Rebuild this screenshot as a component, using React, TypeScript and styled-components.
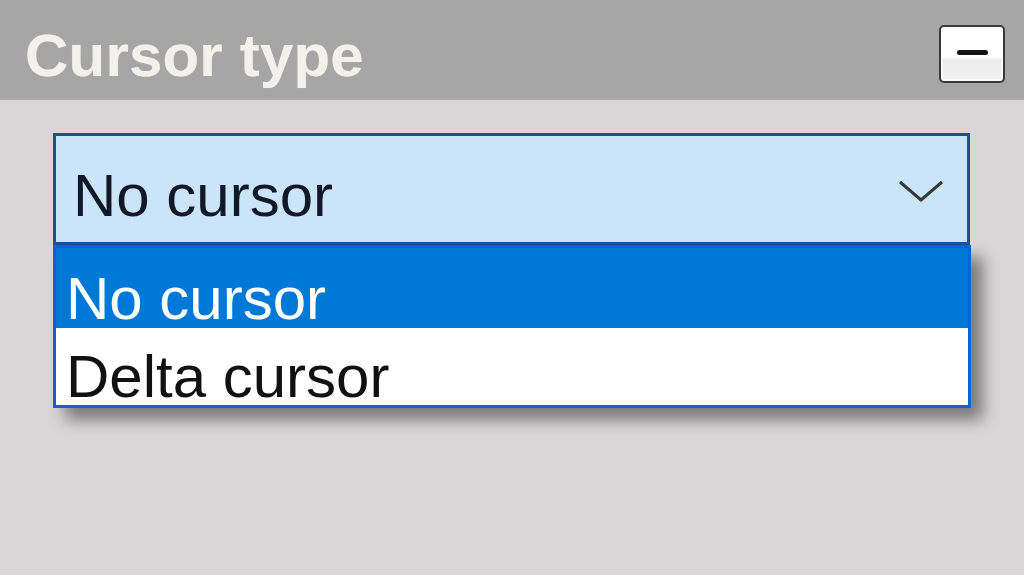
import React from "react";
import styled, { createGlobalStyle } from "styled-components";

const Global = createGlobalStyle`
  html, body { margin: 0; padding: 0; }
  body {
    width: 1024px;
    height: 575px;
    overflow: hidden;
    background: #d8d6d7;
    font-family: "Liberation Sans", Arial, sans-serif;
  }
`;

const Panel = styled.div`
  display: flex;
  flex-direction: column;
  width: 1024px;
  height: 575px;
  background: #d8d6d7;
`;

const Header = styled.div`
  display: flex;
  align-items: flex-start;
  justify-content: space-between;
  height: 100px;
  box-sizing: border-box;
  padding: 0 19px 0 25px;
  background: #a6a6a6;
  border-bottom: 2px solid #acacac;
`;

const Title = styled.div`
  font-family: "Liberation Sans", Arial, sans-serif;
  font-weight: bold;
  font-size: 60px;
  line-height: 1;
  color: #f3f1ec;
  letter-spacing: 0.2px;
  margin-top: 26px;
  text-shadow: 0 0 1px rgba(255, 255, 255, 0.4);
`;

const CollapseButton = styled.button`
  display: flex;
  align-items: flex-start;
  justify-content: center;
  width: 66px;
  height: 58px;
  margin-top: 25px;
  padding: 0;
  box-sizing: border-box;
  border: 2px solid #3a3a3a;
  border-radius: 5px;
  background: linear-gradient(to bottom, #ffffff 0%, #ffffff 55%, #ebebeb 62%, #f2f2f2 100%);
  box-shadow: inset 0 0 0 2px #fafafa;
`;

const MinusBar = styled.span`
  display: block;
  width: 31px;
  height: 5px;
  margin-top: 23px;
  border-radius: 3px;
  background: #111;
`;

const Body = styled.div`
  padding: 33px 54px 0 53px;
`;

const SelectWrap = styled.div`
  position: relative;
`;

const SelectBox = styled.div`
  display: flex;
  align-items: flex-start;
  justify-content: space-between;
  height: 112px;
  box-sizing: border-box;
  padding: 0 22px 0 17px;
  border: 3px solid #1d4f9f;
  background: #cce4f7;
`;

const SelectText = styled.span`
  font-size: 60px;
  line-height: 1;
  color: #111827;
  margin-top: 30px;
`;

const Chevron = styled.svg`
  width: 48px;
  height: 26px;
  margin-top: 42px;
`;

const List = styled.ul`
  position: absolute;
  left: 0;
  right: -1px;
  top: 100%;
  margin: 0;
  padding: 0;
  list-style: none;
  border: 3px solid #0b63d2;
  background: #ffffff;
  box-shadow: 12px 12px 14px rgba(0, 0, 0, 0.42);
`;

const Item = styled.li<{ $selected?: boolean }>`
  display: flex;
  align-items: flex-start;
  height: ${(p) => (p.$selected ? "80px" : "77px")};
  box-sizing: border-box;
  padding: ${(p) => (p.$selected ? "21px" : "19px")} 0 0 10px;
  font-size: 60px;
  line-height: 1;
  color: ${(p) => (p.$selected ? "#ffffff" : "#111111")};
  background: ${(p) => (p.$selected ? "#0078d7" : "#ffffff")};
`;

export default function App() {
  return (
    <>
      <Global />
      <Panel>
        <Header>
          <Title>Cursor type</Title>
          <CollapseButton aria-label="Collapse">
            <MinusBar />
          </CollapseButton>
        </Header>
        <Body>
          <SelectWrap>
            <SelectBox>
              <SelectText>No cursor</SelectText>
              <Chevron viewBox="0 0 48 26">
                <polyline
                  points="3,4 24,22 45,4"
                  fill="none"
                  stroke="#383838"
                  strokeWidth="3"
                />
              </Chevron>
            </SelectBox>
            <List>
              <Item $selected>No cursor</Item>
              <Item>Delta cursor</Item>
            </List>
          </SelectWrap>
        </Body>
      </Panel>
    </>
  );
}
